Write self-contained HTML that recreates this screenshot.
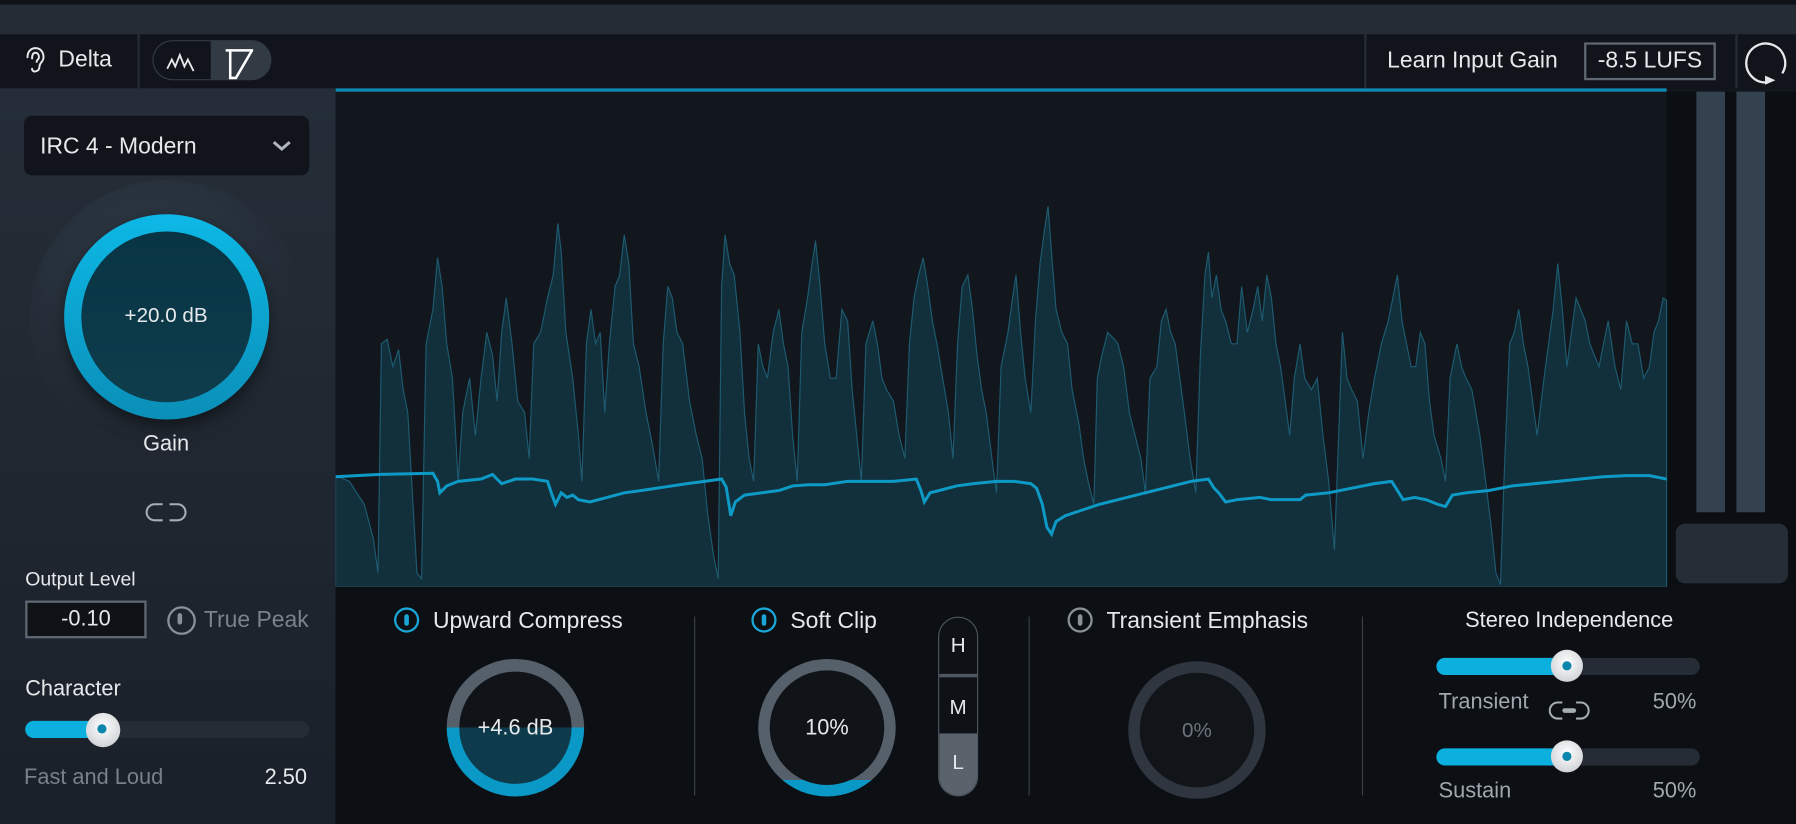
<!DOCTYPE html>
<html><head><meta charset="utf-8"><style>
*{margin:0;padding:0;box-sizing:border-box}
html,body{width:1796px;height:824px;overflow:hidden;background:#0c0f13;font-family:"Liberation Sans",sans-serif}
#s{position:absolute;left:0;top:0;width:1568px;height:719px;transform:scale(1.14541,1.14604);transform-origin:0 0;background:#0c0f13}
.a{position:absolute}
.t{position:absolute;white-space:nowrap;color:#e6e9ec}
.tog{position:absolute;width:22px;height:22px;border-radius:50%;border:2px solid #1aa6d6}
.tog:after{content:"";position:absolute;left:7px;top:4px;width:4px;height:10px;border-radius:2px;background:#1aa6d6}
.tog.g{border-color:#8a9098}.tog.g:after{background:#8a9098}
.knob{position:absolute;border-radius:50%}
.sl{position:absolute;height:15px;border-radius:8px;background:#252c35}
.sl .f{position:absolute;left:0;top:0;height:15px;border-radius:8px;background:#0bb0df}
.th{position:absolute;width:28px;height:28px;border-radius:50%;background:radial-gradient(circle at 50% 40%,#fff,#d4d7da 70%,#aeb2b6);top:-7px}
.th:after{content:"";position:absolute;left:10px;top:10px;width:8px;height:8px;border-radius:50%;background:#0d86ad}
</style></head><body><div id="s">
<div class="a" style="left:0;top:0;width:1568px;height:4px;background:#0f1318"></div>
<div class="a" style="left:0;top:4px;width:1568px;height:26px;background:#252c36"></div>
<div class="a" style="left:0;top:30px;width:1568px;height:47px;background:#11151b"></div>
<div class="a" style="left:120px;top:30px;width:2px;height:47px;background:#252c35"></div>
<div class="a" style="left:1191px;top:30px;width:2px;height:47px;background:#252c35"></div>
<div class="a" style="left:1515px;top:30px;width:2px;height:47px;background:#252c35"></div>
<svg class="a" style="left:18px;top:38px" width="26" height="30" viewBox="0 0 26 30"><path d="M6 12c0-5 3-8 7-8s7 3 7 8c0 3-2 4-3 6s0 5-3 6c-2 1-4 0-4-2M10 13c0-3 1-5 3-5s3 2 3 4c0 2-2 2-2 4" fill="none" stroke="#e6e9ec" stroke-width="1.7" stroke-linecap="round"/></svg>
<div class="t" style="left:51px;top:41px;font-size:20px">Delta</div>
<div class="a" style="left:133px;top:35px;width:104px;height:35px;border-radius:18px;background:#323a44;"></div>
<div class="a" style="left:134px;top:36px;width:50px;height:33px;border-radius:17px 0 0 17px;background:#11151b"></div>
<svg class="a" style="left:144px;top:44px" width="36" height="20"><path d="M2 16l4-8 3 6 4-10 4 10 3-6 5 10" fill="none" stroke="#e6e9ec" stroke-width="1.6"/></svg>
<svg class="a" style="left:196px;top:40px" width="30" height="30"><path d="M1 4h24M5 4v24h5l14-24" fill="none" stroke="#fff" stroke-width="2.2"/></svg>
<div class="t" style="left:1211px;top:42px;font-size:20px">Learn Input Gain</div>
<div class="a" style="left:1383px;top:37px;width:115px;height:33px;border:2px solid #5f6872"></div>
<div class="t" style="left:1383px;width:115px;text-align:center;top:42px;font-size:20px">-8.5 LUFS</div>
<svg class="a" style="left:1520px;top:33px" width="44" height="44"><path d="M22 39A17 17 0 1 1 36 31" fill="none" stroke="#e6e9ec" stroke-width="2"/><path d="M21 33l9 4-9 4z" fill="#e6e9ec"/></svg>
<!-- left panel -->
<div class="a" style="left:0;top:77px;width:293px;height:642px;background:linear-gradient(#252e38,#1a2029)"></div>
<div class="a" style="left:21px;top:101px;width:249px;height:52px;border-radius:7px;background:#11141a"></div>
<div class="t" style="left:35px;top:117px;font-size:20px">IRC 4 - Modern</div>
<svg class="a" style="left:236px;top:121px" width="20" height="14"><path d="M3 3l7 6 7-6" fill="none" stroke="#b0b6bc" stroke-width="2.6"/></svg>
<div class="a" style="left:26px;top:157px;width:240px;height:240px;border-radius:50%;background:radial-gradient(circle at 45% 40%,rgba(80,100,115,.35),rgba(40,50,60,0) 65%)"></div>
<div class="knob" style="left:56px;top:187px;width:179px;height:179px;background:linear-gradient(#0db8e6,#0a8fb8);box-shadow:0 6px 14px rgba(0,0,0,.5)"></div>
<div class="knob" style="left:71px;top:202px;width:149px;height:149px;background:linear-gradient(#083444,#0f3d4c)"></div>
<div class="t" style="left:0;width:290px;text-align:center;top:265px;font-size:18px">+20.0 dB</div>
<div class="t" style="left:0;width:290px;text-align:center;top:377px;font-size:19px">Gain</div>
<svg class="a" style="left:126px;top:437px" width="38" height="20"><path d="M16 3h-7a7 7 0 0 0 0 14h7M22 3h7a7 7 0 0 1 0 14h-7" fill="none" stroke="#a6adb3" stroke-width="1.8"/></svg>
<div class="t" style="left:22px;top:496px;font-size:17px">Output Level</div>
<div class="a" style="left:22px;top:524px;width:106px;height:33px;border:2px solid #5f6872;background:#0f1318"></div>
<div class="t" style="left:22px;width:106px;text-align:center;top:530px;font-size:19px">-0.10</div>
<div class="tog g" style="left:146px;top:529px;width:25px;height:25px"></div>
<div class="t" style="left:178px;top:530px;font-size:20px;color:#7b828a">True Peak</div>
<div class="t" style="left:22px;top:591px;font-size:19px">Character</div>
<div class="sl" style="left:22px;top:629px;width:248px"><div class="f" style="width:70px"></div><div class="th" style="left:53px;width:30px;height:30px"></div></div>
<div class="t" style="left:21px;top:668px;font-size:19px;color:#78808a">Fast and Loud</div>
<div class="t" style="left:200px;width:68px;text-align:right;top:668px;font-size:19px">2.50</div>
<!-- waveform -->
<svg class="a" style="left:293px;top:77px" width="1275" height="436" viewBox="293 77 1275 436">
<rect x="293" y="77" width="1275" height="436" fill="#12171e"/>
<rect x="293" y="77" width="1162" height="3" fill="#0d8bb4"/>
<rect x="1455" y="80" width="113" height="436" fill="#0b0e12"/>
<rect x="1481" y="80" width="25" height="367" fill="#34424f"/>
<rect x="1516" y="80" width="25" height="367" fill="#34424f"/>
<rect x="1463" y="457" width="98" height="52" rx="8" fill="#252d36"/>
<path fill="#12303c" stroke="#1e5b70" stroke-width="1" d="M293 512L293 415 305 420 318 440 326 470 330 500 333 300 338 296 343 320 348 305 352 340 356 360 360 430 364 500 368 505 372 300 378 270 382 225 386 250 390 300 395 330 400 420 404 360 410 330 415 380 420 330 425 290 430 310 434 350 438 290 442 260 447 300 452 350 458 360 462 400 466 300 472 290 478 260 483 240 487 195 490 220 494 290 500 330 505 380 508 420 512 300 516 270 520 300 524 290 528 360 532 300 537 250 541 240 545 205 549 230 553 300 558 320 564 360 570 390 575 420 579 300 583 250 587 260 591 290 596 300 602 350 608 380 613 400 618 450 623 485 627 505 630 250 633 205 637 230 641 240 646 290 650 360 654 400 658 420 662 300 666 320 670 330 675 290 680 270 684 300 688 320 692 380 696 420 700 290 705 260 709 230 712 210 716 250 720 300 725 330 730 330 735 270 740 280 744 340 748 380 752 420 756 300 762 280 766 300 770 330 774 340 780 350 785 380 790 400 794 300 798 260 802 240 806 225 810 250 814 280 818 300 823 330 828 360 832 400 836 300 840 250 845 240 849 270 853 310 857 340 861 360 866 400 870 430 874 320 880 290 884 260 887 240 891 290 895 330 900 360 904 280 908 230 912 200 915 180 918 220 922 270 927 290 932 300 936 340 942 370 946 400 950 420 955 440 958 330 962 310 967 290 972 295 976 300 981 320 986 360 991 380 996 400 1000 430 1004 330 1010 320 1014 280 1018 270 1022 290 1026 300 1030 330 1034 360 1039 400 1044 430 1048 310 1052 240 1055 220 1058 260 1062 240 1066 270 1070 280 1075 300 1080 300 1084 250 1089 290 1094 270 1098 250 1102 280 1106 240 1110 260 1114 300 1118 320 1122 350 1126 380 1130 330 1135 300 1139 330 1145 340 1150 330 1155 380 1160 420 1165 480 1168 400 1172 290 1176 330 1180 340 1185 350 1190 400 1195 360 1200 330 1206 300 1212 280 1216 260 1220 240 1224 280 1228 300 1232 320 1236 320 1240 290 1244 300 1248 350 1252 380 1258 400 1262 420 1266 330 1272 300 1276 320 1280 330 1285 340 1292 380 1297 420 1302 460 1306 500 1310 510 1313 420 1318 300 1322 290 1326 270 1330 300 1334 320 1338 350 1342 380 1348 330 1352 300 1356 270 1360 230 1364 270 1368 320 1372 290 1376 260 1380 270 1384 280 1388 300 1392 310 1396 320 1400 300 1404 280 1410 320 1415 340 1420 280 1425 300 1430 300 1435 330 1440 320 1444 290 1448 280 1452 260 1455 262 1455 512Z"/>
<path fill="none" stroke="#0e9ac6" stroke-width="2.6" d="M293 416L330 414 378 413 382 420 384 430 390 424 400 420 420 418 430 414 438 422 450 418 465 418 478 420 482 432 485 440 490 430 495 434 500 432 505 436 515 438 530 434 545 430 560 428 580 425 600 422 615 420 630 418 634 425 638 450 642 438 650 432 665 430 680 428 692 424 706 423 720 423 740 420 760 420 780 420 800 418 804 428 807 438 812 430 820 428 835 424 850 422 870 420 885 420 900 422 905 426 910 440 914 460 918 466 922 455 930 450 945 445 960 440 980 435 1000 430 1020 425 1040 420 1055 418 1060 426 1064 430 1070 438 1080 436 1100 434 1110 436 1125 436 1135 436 1140 432 1160 430 1180 426 1200 422 1215 420 1220 428 1225 436 1235 434 1245 436 1255 440 1262 442 1268 432 1280 430 1300 428 1320 424 1340 422 1360 420 1380 418 1400 416 1420 415 1440 415 1455 418"/>
</svg>
<!-- bottom panel -->
<div class="a" style="left:293px;top:512px;width:1275px;height:207px;background:#0c0f13"></div>
<div class="a" style="left:606px;top:538px;width:1px;height:156px;background:#3a4149"></div>
<div class="a" style="left:898px;top:538px;width:1px;height:156px;background:#3a4149"></div>
<div class="a" style="left:1189px;top:538px;width:1px;height:156px;background:#3a4149"></div>
<div class="tog" style="left:344px;top:530px"></div>
<div class="t" style="left:378px;top:531px;font-size:20px">Upward Compress</div>
<div class="knob" style="left:390px;top:575px;width:120px;height:120px;background:linear-gradient(#56606b 50%,#0a98c6 50%)"></div>
<div class="knob" style="left:401px;top:586px;width:98px;height:98px;background:linear-gradient(#101419 50%,#0e3b4b 50%)"></div>
<div class="t" style="left:390px;width:120px;text-align:center;top:625px;font-size:19px">+4.6 dB</div>
<div class="tog" style="left:656px;top:530px"></div>
<div class="t" style="left:690px;top:531px;font-size:20px">Soft Clip</div>
<div class="knob" style="left:662px;top:575px;width:120px;height:120px;background:linear-gradient(#56606b 88%,#0a98c6 88%)"></div>
<div class="knob" style="left:672px;top:585px;width:100px;height:100px;background:#101419"></div>
<div class="t" style="left:662px;width:120px;text-align:center;top:625px;font-size:19px">10%</div>
<div class="a" style="left:819px;top:538px;width:35px;height:157px;border-radius:18px;border:1px solid #4e5760;background:#0e1216;overflow:hidden"><div class="a" style="left:0;top:101px;width:35px;height:56px;background:#5a636c"></div><div class="a" style="left:0;top:49px;width:35px;height:3px;background:#4e5760"></div></div>
<div class="t" style="left:819px;width:35px;text-align:center;top:553px;font-size:18px">H</div>
<div class="t" style="left:819px;width:35px;text-align:center;top:607px;font-size:18px">M</div>
<div class="t" style="left:819px;width:35px;text-align:center;top:655px;font-size:18px">L</div>
<div class="tog g" style="left:932px;top:530px"></div>
<div class="t" style="left:966px;top:531px;font-size:20px">Transient Emphasis</div>
<div class="knob" style="left:985px;top:577px;width:120px;height:120px;background:#2f363f"></div>
<div class="knob" style="left:995px;top:587px;width:100px;height:100px;background:#11151a"></div>
<div class="t" style="left:985px;width:120px;text-align:center;top:627px;font-size:18px;color:#6d747c">0%</div>
<div class="t" style="left:1190px;width:360px;text-align:center;top:531px;font-size:19px">Stereo Independence</div>
<div class="sl" style="left:1254px;top:574px;width:230px"><div class="f" style="width:115px"></div><div class="th" style="left:100px"></div></div>
<div class="t" style="left:1256px;top:602px;font-size:19px;color:#a0a7ae">Transient</div>
<svg class="a" style="left:1352px;top:610px" width="36" height="22"><path d="M12 3h-4a7 7 0 0 0 0 14h4M24 3h4a7 7 0 0 1 0 14h-4" fill="none" stroke="#a6adb3" stroke-width="1.8"/><rect x="12" y="8" width="12" height="4" rx="2" fill="#a6adb3"/></svg>
<div class="t" style="left:1420px;width:61px;text-align:right;top:602px;font-size:19px;color:#a0a7ae">50%</div>
<div class="sl" style="left:1254px;top:653px;width:230px"><div class="f" style="width:115px"></div><div class="th" style="left:100px"></div></div>
<div class="t" style="left:1256px;top:680px;font-size:19px;color:#a0a7ae">Sustain</div>
<div class="t" style="left:1420px;width:61px;text-align:right;top:680px;font-size:19px;color:#a0a7ae">50%</div>
</div></body></html>
